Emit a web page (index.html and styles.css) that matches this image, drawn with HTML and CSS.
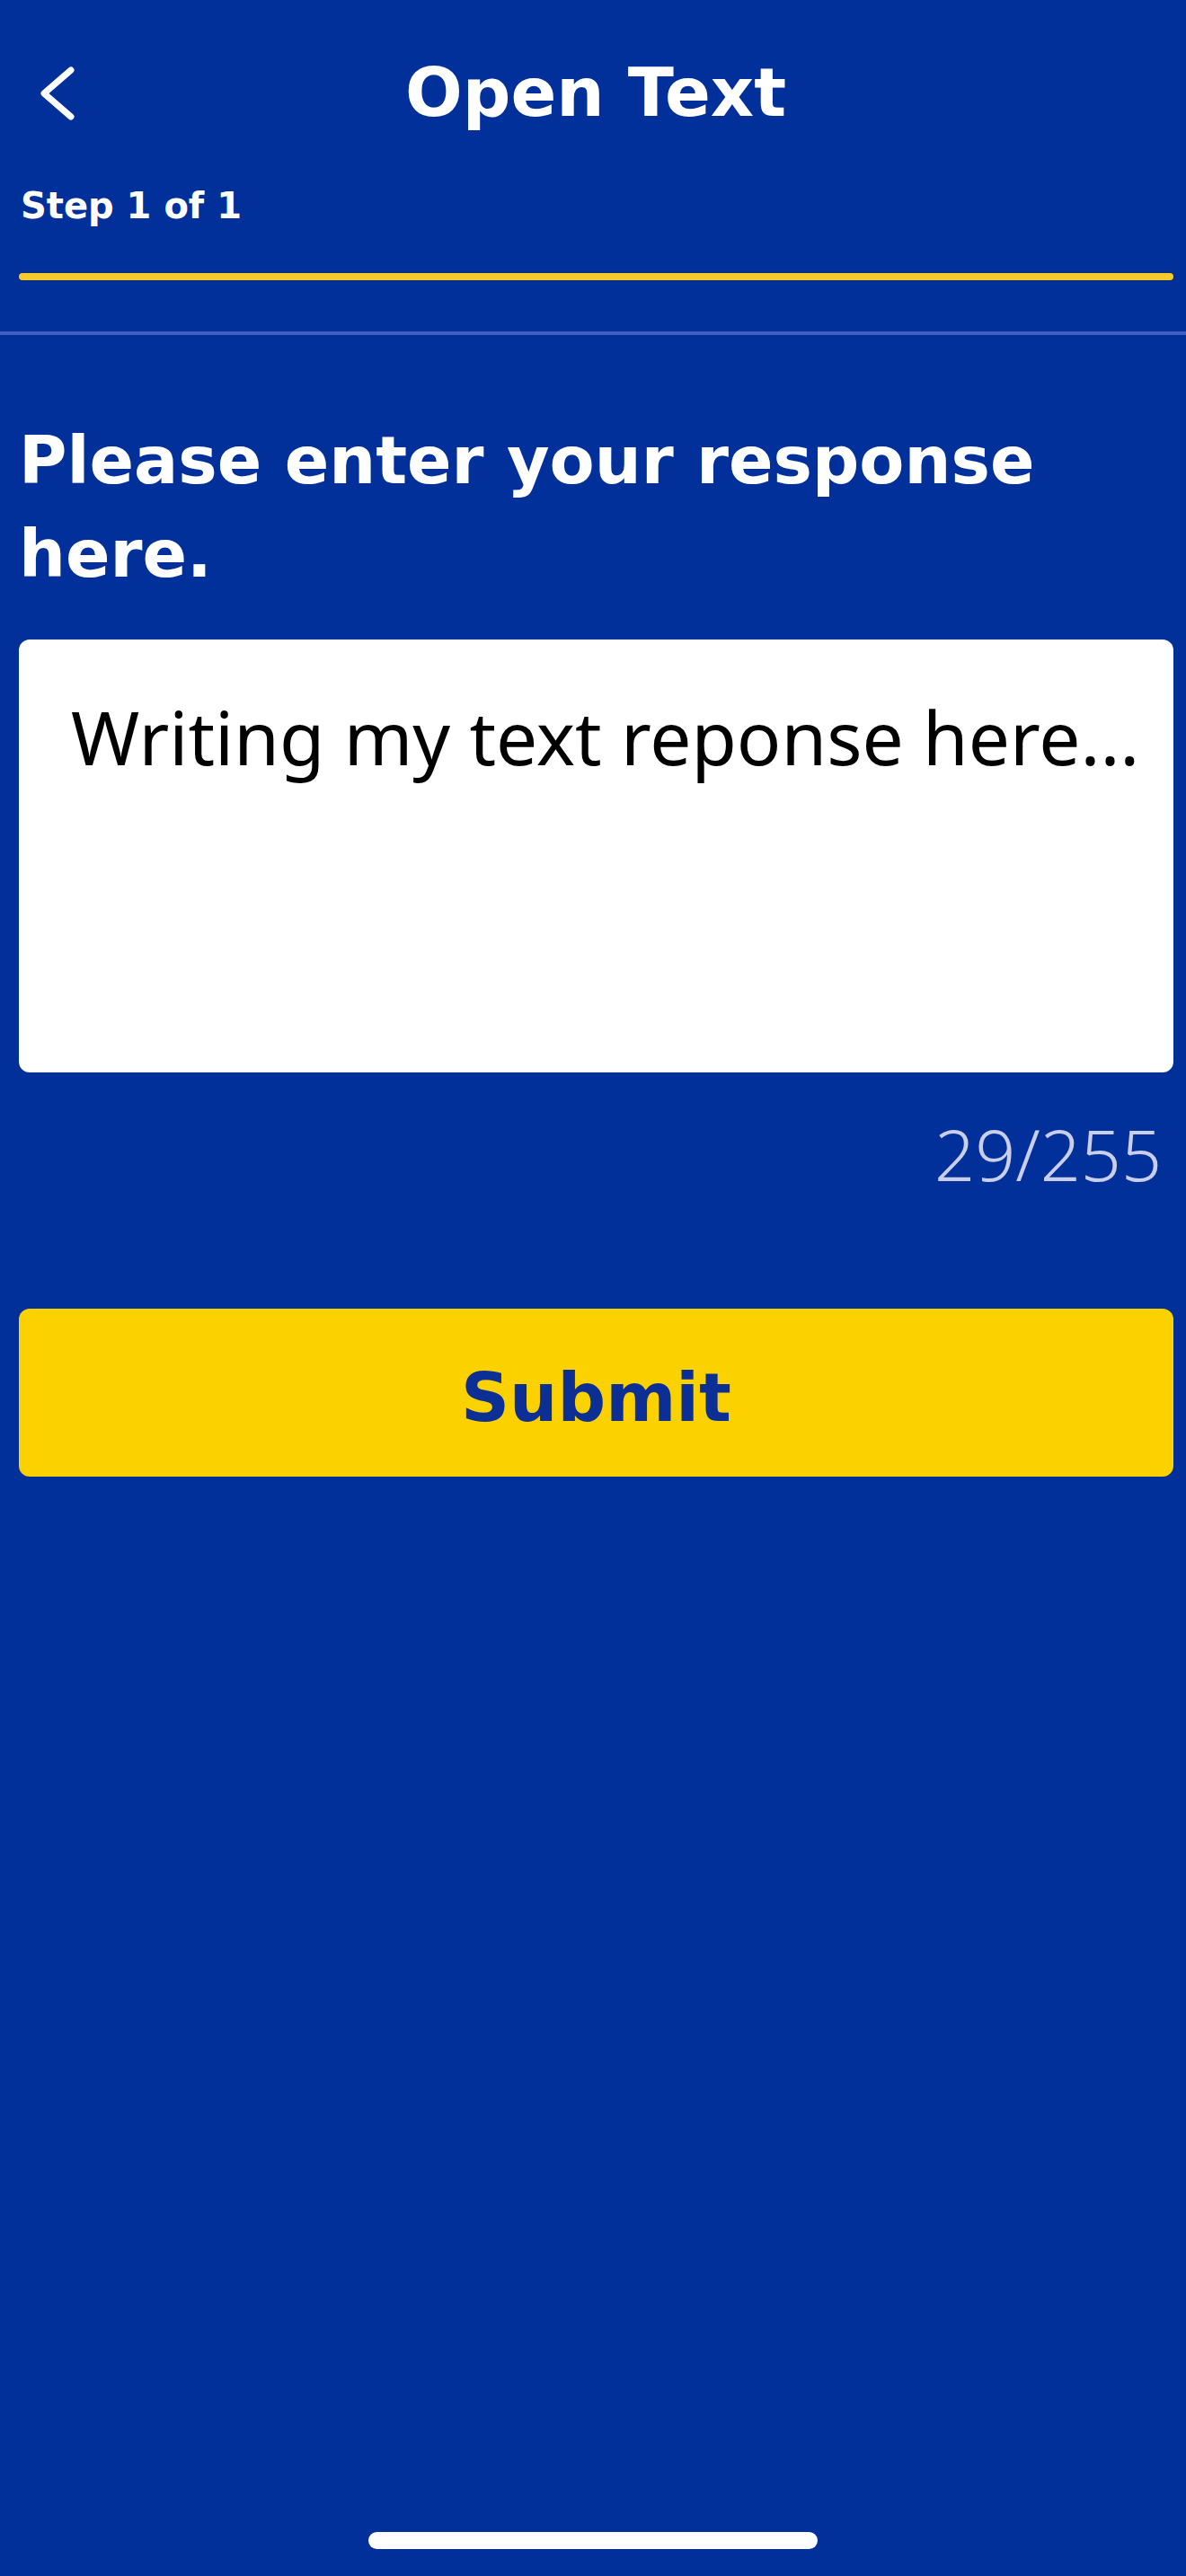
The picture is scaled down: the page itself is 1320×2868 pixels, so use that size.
FILE: index.html
```html
<!DOCTYPE html>
<html lang="en">
<head>
    <meta charset="UTF-8">
    <meta name="viewport" content="width=device-width, initial-scale=1.0">
    <title>Open Text</title>
    <link rel="stylesheet" href="styles.css">
</head>
<body>
<div class="screen">
    <header class="topbar">
        <button class="topbar__back" type="button" aria-label="Back">
            <svg width="44" height="64" viewBox="0 0 44 64">
                <path d="M37 6 L7 32 L37 58" fill="none" stroke="#fff" stroke-width="7"
                      stroke-linecap="round" stroke-linejoin="round"/>
            </svg>
        </button>
        <h1 class="topbar__title">Open Text</h1>
        <span></span>
    </header>

    <div class="progress">
        <p class="progress__label">Step 1 of 1</p>
        <div class="progress__bar"></div>
    </div>

    <hr class="divider">

    <form class="response">
        <label for="answer" class="response__question">Please enter your response here.</label>
        <textarea id="answer" class="response__input" rows="4">Writing my text reponse here...</textarea>
        <p class="response__count">29/255</p>
        <button type="submit" class="response__button">Submit</button>
    </form>

    <div class="home-bar"></div>
</div>
</body>
</html>
```

FILE: styles.css
```css
body {
    margin: 0;
    background-color: #01309a;
    font-family: "DejaVu Sans", sans-serif;
    color: #fff;
}
.screen {
    display: flex;
    flex-direction: column;
    height: 2868px;
    overflow: hidden;
}
.topbar {
    display: grid;
    grid-template-columns: 1fr auto 1fr;
    align-items: center;
    padding: 66px 0 0 42px;
}
.topbar__back {
    justify-self: start;
    background: none;
    border: none;
    padding: 0;
    height: 64px;
    cursor: pointer;
}
.topbar__title {
    margin: 0 0 0 -36px;
    font-size: 75px;
    line-height: 75px;
    font-weight: bold;
}
.progress {
    padding: 0 14px 0 21px;
}
.progress__label {
    margin: 68px 0 0 2px;
    font-size: 40px;
    line-height: 40px;
    font-weight: bold;
}
.progress__bar {
    margin-top: 55px;
    height: 8px;
    border-radius: 4px;
    background-color: #f4ca2e;
    box-shadow: 0 0 0 1px rgba(40, 40, 20, 0.35);
}
.divider {
    margin: 57px 0 0;
    border: none;
    height: 4px;
    background-color: #3f60c2;
}
.response {
    display: flex;
    flex-direction: column;
    padding: 0 14px 0 21px;
}
.response__question {
    margin-top: 88px;
    font-size: 73px;
    line-height: 104px;
    font-weight: bold;
}
.response__input {
    margin-top: 43px;
    height: 482px;
    box-sizing: border-box;
    padding: 59px 20px 0 58px;
    border: none;
    border-radius: 12px;
    background: #fff;
    color: #000;
    font-family: "Noto Sans", sans-serif;
    font-size: 82px;
    line-height: 1.2;
    resize: none;
    outline: none;
    overflow: hidden;
}
.response__count {
    align-self: flex-end;
    margin: 51px 13px 0 0;
    font-family: "Noto Sans", sans-serif;
    font-weight: 300;
    font-size: 79px;
    line-height: 79px;
    color: #c9cfea;
}
.response__button {
    margin-top: 133px;
    height: 187px;
    padding-top: 12px;
    border: none;
    border-radius: 12px;
    background-color: #fcd100;
    color: #0b2f95;
    font-family: "DejaVu Sans", sans-serif;
    font-size: 75px;
    line-height: 75px;
    font-weight: bold;
    cursor: pointer;
}
.home-bar {
    align-self: center;
    margin: auto 0 30px;
    width: 500px;
    height: 19px;
    border-radius: 10px;
    background: #fff;
}
```
